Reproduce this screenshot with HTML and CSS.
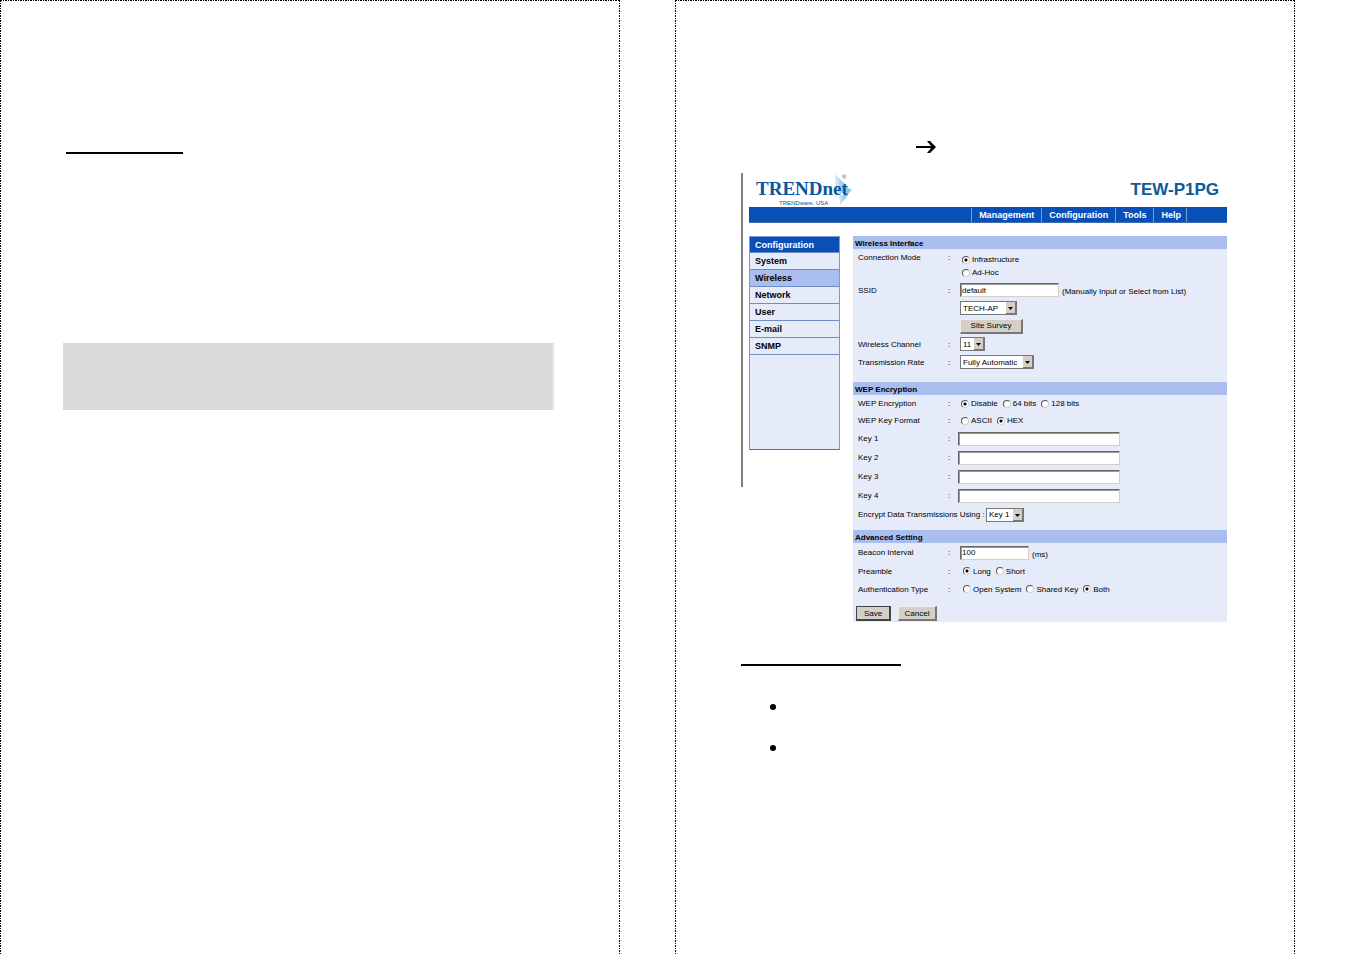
FILE: index.html
```html
<!DOCTYPE html>
<html lang="en">
<head>
    <meta charset="UTF-8">
    <meta name="viewport" content="width=device-width, initial-scale=1.0">
    <title>TEW-P1PG - Wireless</title>
    <link rel="stylesheet" href="styles.css">
</head>
<body>

<div class="spread">
    <section class="page page-left">
        <hr class="rule rule-short">
        <div class="note"></div>
    </section>

    <section class="page page-right">
        <div class="path">
            <svg class="arrow" viewBox="0 0 20 12" aria-hidden="true">
                <path d="M0 5H15L11 0H14L20 6L14 12H11L15 7H0Z" />
            </svg>
        </div>

        <div class="shot">
            <div class="edge"></div>
            <div class="app">
                <header class="header">
                    <svg class="logo" viewBox="0 0 100 34" role="img" aria-label="TRENDnet">
                        <defs>
                            <linearGradient id="fade" x1="0" x2="1">
                                <stop offset="0" stop-color="#d9effa" />
                                <stop offset="1" stop-color="#6fb9e6" />
                            </linearGradient>
                        </defs>
                        <path d="M79 1L91 13V20H79Z" fill="url(#fade)" />
                        <path d="M86 11L96 17L88 25Z" fill="#8cc8ec" />
                        <path d="M83 22H92L84 32Z" fill="url(#fade)" />
                        <text class="logo-name" x="0" y="22">TRENDnet</text>
                        <text class="logo-sub" x="23" y="32">TRENDware, USA</text>
                        <text class="logo-reg" x="86" y="6">®</text>
                    </svg>
                    <h1 class="model">TEW-P1PG</h1>
                </header>

                <nav class="nav">
                    <a href="#">Management</a>
                    <a href="#">Configuration</a>
                    <a href="#">Tools</a>
                    <a href="#">Help</a>
                </nav>

                <div class="columns">
                    <aside class="menu">
                        <h2>Configuration</h2>
                        <a href="#">System</a>
                        <a href="#" class="active">Wireless</a>
                        <a href="#">Network</a>
                        <a href="#">User</a>
                        <a href="#">E-mail</a>
                        <a href="#">SNMP</a>
                    </aside>

                    <form class="settings">
                        <h3>Wireless Interface</h3>
                        <div class="group group-wireless">
                            <div class="row row-mode">
                                <span class="name">Connection Mode</span><span class="colon">:</span>
                                <div class="stack">
                                    <label class="option"><input type="radio" name="mode" checked> Infrastructure</label>
                                    <label class="option"><input type="radio" name="mode"> Ad-Hoc</label>
                                </div>
                            </div>
                            <div class="row">
                                <label class="name" for="ssid">SSID</label><span class="colon">:</span>
                                <input type="text" class="ssid" id="ssid" value="default">
                                <span class="hint">(Manually Input or Select from List)</span>
                            </div>
                            <div class="row row-indent">
                                <select class="ap" aria-label="SSID list"><option>TECH-AP</option></select>
                            </div>
                            <div class="row row-indent">
                                <button type="button" class="survey">Site Survey</button>
                            </div>
                            <div class="row">
                                <label class="name" for="channel">Wireless Channel</label><span class="colon">:</span>
                                <select class="channel" id="channel"><option>11</option></select>
                            </div>
                            <div class="row">
                                <label class="name" for="rate">Transmission Rate</label><span class="colon">:</span>
                                <select class="rate" id="rate"><option>Fully Automatic</option></select>
                            </div>
                        </div>

                        <h3>WEP Encryption</h3>
                        <div class="group group-wep">
                            <div class="row row-tight">
                                <span class="name">WEP Encryption</span><span class="colon">:</span>
                                <label class="option"><input type="radio" name="wep" checked> Disable</label>
                                <label class="option"><input type="radio" name="wep"> 64 bits</label>
                                <label class="option"><input type="radio" name="wep"> 128 bits</label>
                            </div>
                            <div class="row row-tight">
                                <span class="name">WEP Key Format</span><span class="colon">:</span>
                                <label class="option"><input type="radio" name="format"> ASCII</label>
                                <label class="option"><input type="radio" name="format" checked> HEX</label>
                            </div>
                            <div class="row row-key">
                                <label class="name" for="key1">Key 1</label><span class="colon">:</span>
                                <input type="text" class="key" id="key1">
                            </div>
                            <div class="row row-key">
                                <label class="name" for="key2">Key 2</label><span class="colon">:</span>
                                <input type="text" class="key" id="key2">
                            </div>
                            <div class="row row-key">
                                <label class="name" for="key3">Key 3</label><span class="colon">:</span>
                                <input type="text" class="key" id="key3">
                            </div>
                            <div class="row row-key">
                                <label class="name" for="key4">Key 4</label><span class="colon">:</span>
                                <input type="text" class="key" id="key4">
                            </div>
                            <div class="row row-key">
                                <label class="using" for="using">Encrypt Data Transmissions Using :</label>
                                <select class="using-key" id="using"><option>Key 1</option></select>
                            </div>
                        </div>

                        <h3>Advanced Setting</h3>
                        <div class="group group-advanced">
                            <div class="row row-key">
                                <label class="name" for="beacon">Beacon Interval</label><span class="colon">:</span>
                                <input type="text" class="beacon" id="beacon" value="100">
                                <span class="hint">(ms)</span>
                            </div>
                            <div class="row row-radio">
                                <span class="name">Preamble</span><span class="colon">:</span>
                                <label class="option"><input type="radio" name="preamble" checked> Long</label>
                                <label class="option"><input type="radio" name="preamble"> Short</label>
                            </div>
                            <div class="row row-radio">
                                <span class="name">Authentication Type</span><span class="colon">:</span>
                                <label class="option"><input type="radio" name="auth"> Open System</label>
                                <label class="option"><input type="radio" name="auth"> Shared Key</label>
                                <label class="option"><input type="radio" name="auth" checked> Both</label>
                            </div>
                            <div class="actions">
                                <button type="submit" class="save">Save</button>
                                <button type="reset" class="cancel">Cancel</button>
                            </div>
                        </div>
                    </form>
                </div>
            </div>
        </div>

        <hr class="rule rule-long">
        <ul class="points">
            <li></li>
            <li></li>
        </ul>
    </section>
</div>

</body>
</html>
```
FILE: styles.css
```css
* {
    box-sizing: border-box;
}
body {
    margin: 0;
    background-color: white;
    color: black;
    font-family: "Liberation Sans", Arial, sans-serif;
    font-size: 8px;
}
.spread {
    display: grid;
    grid-template-columns: 1fr 1fr;
    gap: 55px;
    padding-right: 56px;
    min-height: 100vh;
}
/* cut lines round each page */
.page {
    background-image:
        repeating-linear-gradient(90deg, black 0 2px, transparent 2px 3px, black 3px 4px, transparent 4px 5px),
        repeating-linear-gradient(black 0 2px, transparent 2px 3px, black 3px 4px, transparent 4px 5px),
        repeating-linear-gradient(black 0 2px, transparent 2px 3px, black 3px 4px, transparent 4px 5px);
    background-size: 100% 1px, 1px 100%, 1px 100%;
    background-position: top, left, right;
    background-repeat: no-repeat;
}
.page-left {
    padding: 152px 66px 0 63px;
}
.page-right {
    padding: 141px 68px 0 66px;
}
.rule {
    height: 2px;
    margin: 0;
    border: none;
    background-color: black;
}
.rule-short {
    width: 117px;
    margin-left: 3px;
}
.rule-long {
    width: 160px;
    margin-top: 42px;
}
.note {
    height: 67px;
    margin-top: 189px;
    background-color: #d9d9d9;
    border-right: 2px solid #e2e2e2;
}
.path {
    display: flex;
    height: 32px;
    padding-left: 175px;
}
.arrow {
    width: 20px;
    height: 12px;
}

/* router page */
.shot {
    display: flex;
    gap: 6px;
}
.edge {
    width: 2px;
    height: 314px;
    background-color: #808080;
}
.app {
    flex: 1;
}
.header {
    display: flex;
    justify-content: space-between;
    height: 34px;
    padding: 0 8px 0 7px;
}
.logo {
    width: 100px;
    height: 34px;
    overflow: visible;
}
.logo-name {
    font: bold 19px "Liberation Serif", "Times New Roman", serif;
    fill: #0b55a0;
}
.logo-sub {
    font-size: 6px;
    fill: #0f5580;
}
.logo-reg {
    font-size: 6px;
    fill: #555;
}
.model {
    margin: 0;
    padding-top: 7px;
    font-size: 17px;
    line-height: 20px;
    color: #0a5a9c;
}
.nav {
    display: flex;
    justify-content: flex-end;
    align-items: center;
    height: 16px;
    padding-right: 40px;
    background-color: #0850b8;
    border-bottom: 1px solid #3f6db0;
}
.nav a {
    padding: 0 7px;
    border-left: 1px solid #7d9bc8;
    color: white;
    font-size: 9px;
    font-weight: bold;
    line-height: 14px;
    text-decoration: none;
}
.nav a:last-child {
    padding-right: 5px;
    border-right: 1px solid #7d9bc8;
}
.columns {
    display: flex;
    align-items: flex-start;
    gap: 13px;
    padding-top: 13px;
}
.menu {
    flex: 0 0 91px;
    min-height: 214px;
    background-color: #e6ebfa;
    border: 1px solid #7b98cf;
    border-bottom-color: #4f6da8;
}
.menu h2,
.menu a {
    display: block;
    height: 17px;
    margin: 0;
    padding-left: 5px;
    border-bottom: 1px solid #6f8fc4;
    color: black;
    font-size: 9px;
    font-weight: bold;
    line-height: 17px;
    text-decoration: none;
}
.menu h2 {
    height: 16px;
    background-color: #0850b8;
    color: white;
}
.menu .active {
    background-color: #a9bdee;
}

/* settings form */
.settings {
    flex: 1;
    background-color: #e6ebfa;
}
.settings h3 {
    height: 13px;
    margin: 0;
    padding-left: 2px;
    background-color: #a9bdee;
    font-size: 8px;
    line-height: 15px;
}
.group {
    padding-left: 5px;
}
.group-wireless {
    padding-bottom: 11px;
}
.group-wep {
    padding-bottom: 6px;
}
.row {
    display: flex;
    align-items: center;
    height: 18px;
    white-space: nowrap;
}
.row-mode {
    align-items: flex-start;
    height: 32px;
    padding-top: 4px;
}
.row-tight {
    height: 17px;
}
.row-key {
    height: 19px;
}
.row-indent {
    padding-left: 102px;
}
.name {
    width: 90px;
}
.colon {
    width: 12px;
}
.option {
    display: flex;
    align-items: center;
    gap: 2px;
    height: 13px;
    margin-right: 5px;
}
.stack {
    padding-left: 2px;
}
.row-tight .colon {
    width: 13px;
}
.row-radio .colon {
    width: 15px;
}
input,
select,
button {
    margin: 0;
    border-radius: 0;
    color: black;
    font-family: inherit;
    font-size: 8px;
}
input[type="text"] {
    height: 14px;
    padding: 0 1px;
    background-color: white;
    border: 1px solid #d4d0c8;
    border-top-color: #666;
    border-left-color: #666;
    box-shadow: inset 1px 1px #999;
}
input[type="radio"] {
    appearance: none;
    width: 8px;
    height: 8px;
    border: 1px solid #555;
    border-right-color: #d4d0c8;
    border-bottom-color: #d4d0c8;
    border-radius: 50%;
    background-color: white;
}
input[type="radio"]:checked {
    background-image: radial-gradient(circle, black 0 1px, transparent 2px);
}
select {
    appearance: none;
    height: 14px;
    padding: 0 2px;
    border: 1px solid #777;
    background-color: white;
    background-image: url("data:image/svg+xml,%3Csvg xmlns='http://www.w3.org/2000/svg' viewBox='0 0 10 12'%3E%3Cpath d='M0 0H10V12H0Z' fill='%23777'/%3E%3Cpath d='M0 0H9V11H0Z' fill='%23d4d0c8'/%3E%3Cpath d='M2 5H7L4.500 8Z'/%3E%3C/svg%3E");
    background-position: right;
    background-repeat: no-repeat;
    background-size: 10px 12px;
}
button {
    height: 15px;
    padding: 0;
    background-color: #d4d0c8;
    border: 1px solid #f0eeea;
    border-right: 2px solid #777;
    border-bottom: 2px solid #777;
}
.ssid {
    width: 99px;
}
.key {
    width: 162px;
    margin-left: -2px;
}
.beacon {
    width: 69px;
}
.hint {
    padding: 3px 0 0 3px;
}
.ap {
    width: 57px;
}
.survey {
    width: 63px;
}
.channel {
    width: 25px;
}
.rate {
    width: 74px;
}
.using {
    width: 128px;
}
.using-key {
    width: 38px;
}
.actions {
    display: flex;
    gap: 7px;
    margin-left: -2px;
    padding: 8px 0 1px;
}
.save {
    width: 35px;
    border: 1px solid #444;
    border-right-width: 2px;
    border-bottom-width: 2px;
}
.cancel {
    width: 39px;
}

.points {
    margin: 0;
    padding: 38px 0 0 29px;
    list-style: none;
}
.points li {
    width: 6px;
    height: 6px;
    margin-bottom: 35px;
    border-radius: 50%;
    background-color: black;
}
```
